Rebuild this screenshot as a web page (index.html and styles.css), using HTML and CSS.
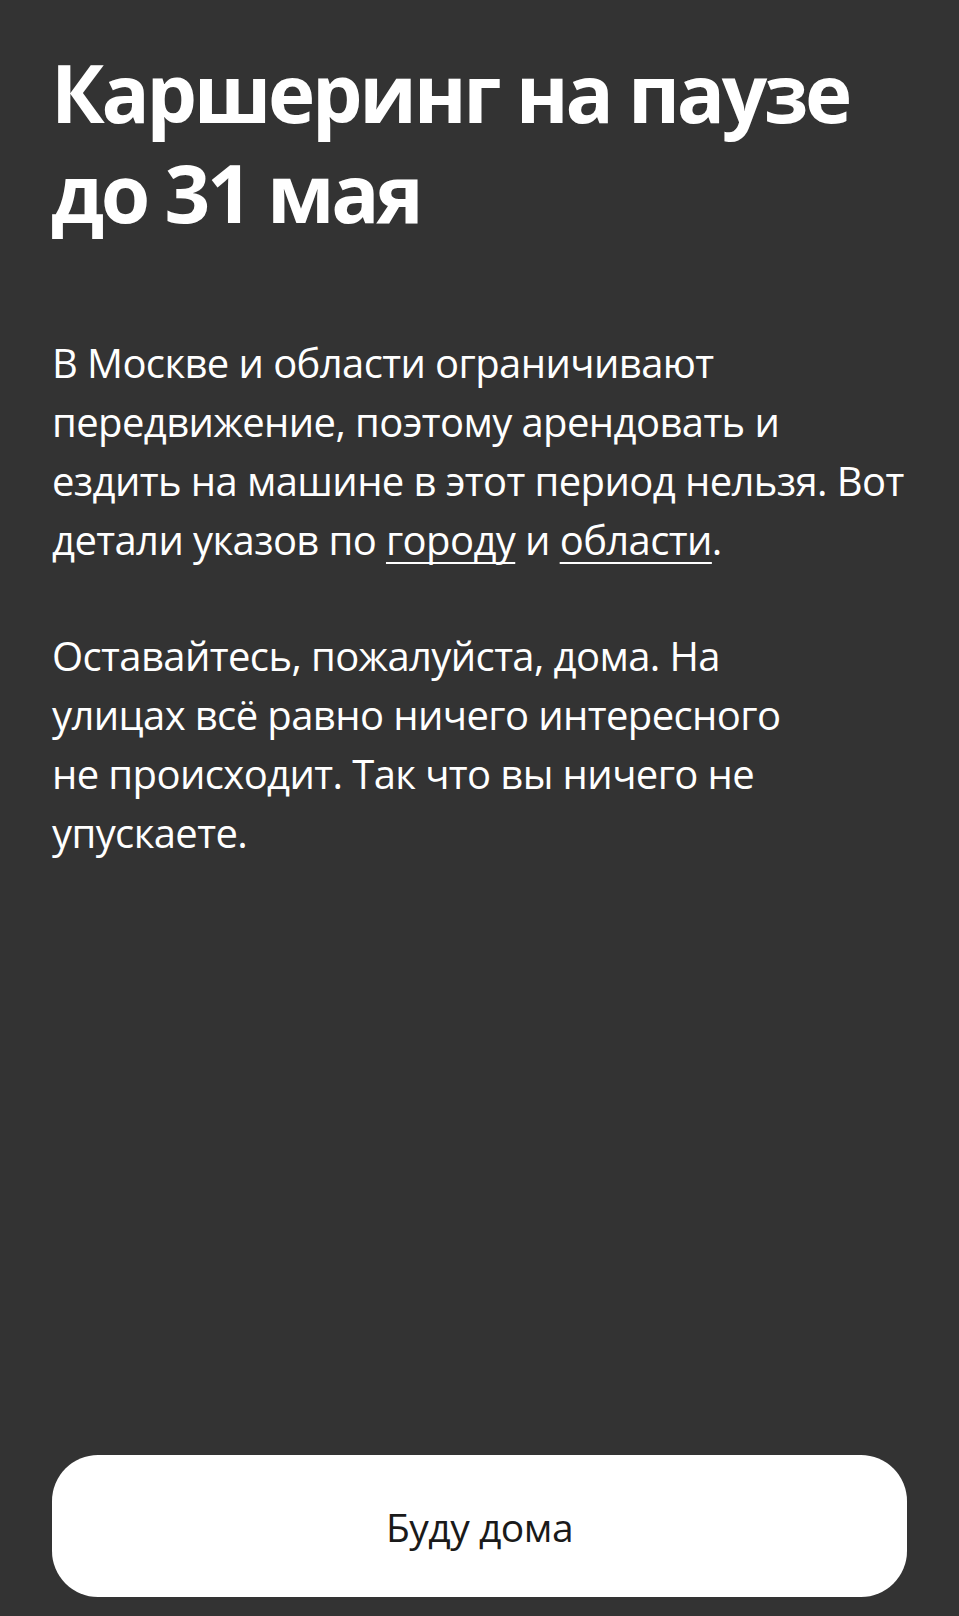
FILE: index.html
```html
<!DOCTYPE html>
<html lang="ru">
<head>
<meta charset="utf-8">
<title>Каршеринг на паузе</title>
<link rel="stylesheet" href="styles.css">
</head>
<body>
<main class="screen">
  <section class="content">
    <h1 class="title">Каршеринг на паузе<br>до 31 мая</h1>
    <p class="text">В Москве и области ограничивают<br>передвижение, поэтому арендовать и<br>ездить на машине в этот период нельзя. Вот<br>детали указов по <a class="link" href="#">городу</a> и <a class="link" href="#">области</a>.</p>
    <p class="text">Оставайтесь, пожалуйста, дома. На<br>улицах всё равно ничего интересного<br>не происходит. Так что вы ничего не<br>упускаете.</p>
  </section>
  <button class="btn" type="button">Буду дома</button>
</main>
</body>
</html>
```
FILE: styles.css
```css
html, body {
  margin: 0;
  padding: 0;
  background: #333333;
}
.screen {
  box-sizing: border-box;
  min-height: 1616px;
  display: flex;
  flex-direction: column;
  padding: 0 52px 19px 52px;
  font-family: "Open Sans", "Noto Sans", sans-serif;
  color: #ffffff;
}
.content {
  flex: 1;
}
.title {
  margin: 42px 0 0 -1px;
  font-size: 80px;
  line-height: 100px;
  font-weight: 700;
  letter-spacing: -3.3px;
}
.text {
  margin: 0;
  font-size: 40px;
  line-height: 59px;
  letter-spacing: -0.6px;
  white-space: nowrap;
}
.title + .text {
  margin-top: 91px;
}
.text + .text {
  margin-top: 57px;
}
.link {
  color: #ffffff;
  text-decoration: underline;
  text-decoration-thickness: 2px;
  text-underline-offset: 7px;
  text-decoration-skip-ink: none;
}
.btn {
  display: block;
  width: 100%;
  height: 142px;
  border: none;
  border-radius: 46px;
  background: #ffffff;
  color: #1a1a1a;
  font-family: "Open Sans", "Noto Sans", sans-serif;
  font-size: 39px;
  letter-spacing: -0.5px;
  padding: 0;
}
```
